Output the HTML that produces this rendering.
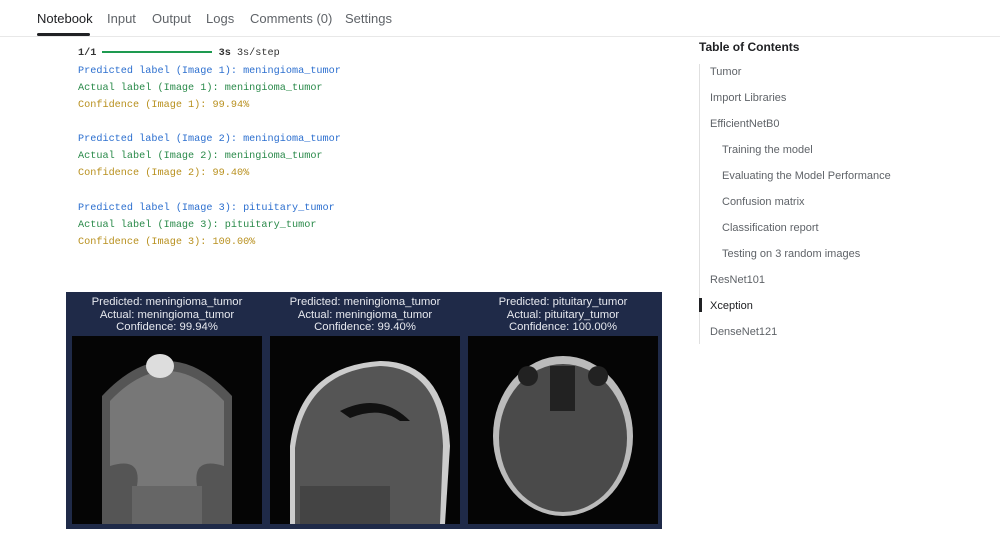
<!DOCTYPE html>
<html><head><style>
body{margin:0;width:1000px;height:539px;background:#fff;font-family:"Liberation Sans",sans-serif;position:relative;overflow:hidden}
.tabs{position:absolute;left:0;top:0;width:1000px;height:36px;border-bottom:1px solid #e8e8e8}
.tab{position:absolute;top:11px;font-size:13px;color:#5f6368}
.mono{position:absolute;left:78px;font-family:"Liberation Mono",monospace;font-size:10.2px;white-space:pre;margin-top:2px}
.b{color:#2c6fcf}.g{color:#2a8a4a}.y{color:#b8901e}
.toc{position:absolute;font-size:11px;color:#5f6368}
.fig{position:absolute;left:66px;top:292px;width:596px;height:237px;background:#1f2a48}
.cap{position:absolute;top:4px;width:198px;text-align:center;color:#e6e8ee;font-size:11.3px;line-height:12.5px}
.img{position:absolute;top:44px;width:190px;height:188px;background:#050505;overflow:hidden}
</style></head><body>
<div class="tabs">
<span class="tab" style="left:37px;color:#202124">Notebook</span>
<div style="position:absolute;left:37px;top:33px;width:53px;height:3px;background:#202124;border-radius:2px"></div>
<span class="tab" style="left:107px">Input</span>
<span class="tab" style="left:152px">Output</span>
<span class="tab" style="left:206px">Logs</span>
<span class="tab" style="left:250px">Comments (0)</span>
<span class="tab" style="left:345px">Settings</span>
</div>
<div class="mono" style="top:46px;color:#333"><b>1/1</b> <span style="display:inline-block;width:110px;height:2px;background:#1e9a50;vertical-align:middle"></span> <b>3s</b> 3s/step</div>
<div class="mono b" style="top:64px">Predicted label (Image 1): meningioma_tumor</div>
<div class="mono g" style="top:81px">Actual label (Image 1): meningioma_tumor</div>
<div class="mono y" style="top:98px">Confidence (Image 1): 99.94%</div>
<div class="mono b" style="top:132px">Predicted label (Image 2): meningioma_tumor</div>
<div class="mono g" style="top:149px">Actual label (Image 2): meningioma_tumor</div>
<div class="mono y" style="top:166px">Confidence (Image 2): 99.40%</div>
<div class="mono b" style="top:201px">Predicted label (Image 3): pituitary_tumor</div>
<div class="mono g" style="top:218px">Actual label (Image 3): pituitary_tumor</div>
<div class="mono y" style="top:235px">Confidence (Image 3): 100.00%</div>

<div class="fig">
<div class="cap" style="left:2px">Predicted: meningioma_tumor<br>Actual: meningioma_tumor<br>Confidence: 99.94%</div>
<div class="cap" style="left:200px">Predicted: meningioma_tumor<br>Actual: meningioma_tumor<br>Confidence: 99.40%</div>
<div class="cap" style="left:398px">Predicted: pituitary_tumor<br>Actual: pituitary_tumor<br>Confidence: 100.00%</div>
<div class="img" style="left:6px"><svg width="190" height="188">
<path d="M30 188 L30 60 Q95 -10 160 60 L160 188 Z" fill="#555"/>
<path d="M38 130 L38 65 Q95 5 152 65 L152 130 Q120 120 125 150 L65 150 Q70 120 38 130Z" fill="#777"/>
<ellipse cx="88" cy="30" rx="14" ry="12" fill="#ddd"/>
<rect x="60" y="150" width="70" height="38" fill="#666"/></svg></div>
<div class="img" style="left:204px"><svg width="190" height="188">
<path d="M20 188 L20 110 Q30 30 110 25 Q175 25 180 110 L175 188Z" fill="#ccc"/>
<path d="M25 188 L25 112 Q35 35 110 30 Q170 32 173 110 L170 188Z" fill="#555"/>
<path d="M70 75 Q110 55 140 85 L130 85 Q110 70 80 82Z" fill="#111"/>
<rect x="30" y="150" width="90" height="38" fill="#444"/></svg></div>
<div class="img" style="left:402px"><svg width="190" height="188">
<ellipse cx="95" cy="100" rx="70" ry="80" fill="#bbb"/>
<ellipse cx="95" cy="102" rx="64" ry="74" fill="#4a4a4a"/>
<ellipse cx="60" cy="40" rx="10" ry="10" fill="#222"/><ellipse cx="130" cy="40" rx="10" ry="10" fill="#222"/>
<rect x="82" y="30" width="25" height="45" fill="#222"/></svg></div>
</div>

<div class="toc" style="left:699px;top:40px;font-size:12px;font-weight:bold;color:#202124">Table of Contents</div>
<div style="position:absolute;left:699px;top:64px;width:1px;height:280px;background:#e0e0e0"></div>
<div style="position:absolute;left:699px;top:298px;width:3px;height:14px;background:#202124"></div>
<div class="toc" style="left:710px;top:66px">Tumor</div>
<div class="toc" style="left:710px;top:92px">Import Libraries</div>
<div class="toc" style="left:710px;top:118px">EfficientNetB0</div>
<div class="toc" style="left:722px;top:144px">Training the model</div>
<div class="toc" style="left:722px;top:170px">Evaluating the Model Performance</div>
<div class="toc" style="left:722px;top:196px">Confusion matrix</div>
<div class="toc" style="left:722px;top:222px">Classification report</div>
<div class="toc" style="left:722px;top:248px">Testing on 3 random images</div>
<div class="toc" style="left:710px;top:274px">ResNet101</div>
<div class="toc" style="left:710px;top:300px;color:#202124">Xception</div>
<div class="toc" style="left:710px;top:326px">DenseNet121</div>
</body></html>
